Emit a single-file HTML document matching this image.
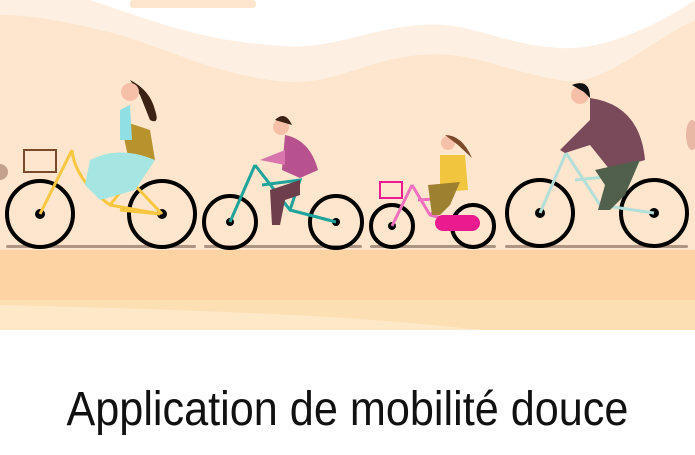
<!DOCTYPE html>
<html><head><meta charset="utf-8"><style>
html,body{margin:0;padding:0;background:#fff;width:695px;height:455px;overflow:hidden}
svg{display:block;position:absolute;left:0;top:0}
h1{position:absolute;left:0;width:695px;top:382px;margin:0;text-align:center;font:400 48px "Liberation Sans Narrow","Liberation Sans",sans-serif;color:#111;transform:scaleX(0.9);transform-origin:347px 0}
</style></head><body>
<svg width="695" height="330" viewBox="0 0 695 330">
<rect width="695" height="330" fill="#fde6cd"/>
<path d="M0 0H695V20C650 40 600 90 560 80C500 70 470 50 420 55C360 60 330 90 270 80C200 70 150 40 100 30C60 20 30 15 0 15Z" fill="#fdf0e2"/>
<path d="M90 0H695V0C650 30 600 50 560 48C500 45 470 20 420 25C360 30 330 52 270 45C200 40 150 20 90 0Z" fill="#fff"/>
<rect x="130" y="0" width="126" height="8" rx="3" fill="#fde6cd"/>
<path d="M0 250H695V300C500 300 300 310 0 300Z" fill="#fdd3a3"/>
<path d="M0 300C500 300 600 300 695 300V330H0Z" fill="#fddfb4"/>
<path d="M0 305C200 310 350 315 480 330H0Z" fill="#fde9c8"/>
<g fill="#8d7263" opacity=".7">
<rect x="6" y="245" width="190" height="3" rx="1.5"/><rect x="204" y="245" width="158" height="3" rx="1.5"/><rect x="370" y="245" width="126" height="3" rx="1.5"/><rect x="505" y="245" width="183" height="3" rx="1.5"/></g>
<g fill="none" stroke="#000" stroke-width="4">
<circle cx="40" cy="214" r="33"/><circle cx="162" cy="214" r="33"/>
<circle cx="230" cy="222" r="26"/><circle cx="336" cy="222" r="26"/>
<circle cx="392" cy="226" r="21"/><circle cx="473" cy="226" r="21"/>
<circle cx="540" cy="213" r="33"/><circle cx="654" cy="213" r="33"/></g>
<g fill="#000"><circle cx="40" cy="214" r="5"/><circle cx="162" cy="214" r="5"/><circle cx="230" cy="222" r="4"/><circle cx="336" cy="222" r="4"/><circle cx="392" cy="226" r="4"/><circle cx="540" cy="213" r="5"/><circle cx="654" cy="213" r="5"/></g>
<g stroke="#f8c63f" stroke-width="3" fill="none"><path d="M40 214L72 150M72 150Q75 180 110 205L160 214L120 210M110 205L130 180L162 214"/></g>
<rect x="24" y="150" width="32" height="22" fill="none" stroke="#7a4a2a" stroke-width="2"/>
<path d="M120 120L150 130L155 160L130 165Z" fill="#b8922c"/>
<path d="M90 160Q120 145 155 160L135 190L100 200L85 185Z" fill="#a5e6e3"/>
<path d="M130 80Q150 90 155 110Q160 125 150 120L140 95Z" fill="#3b2214"/>
<circle cx="130" cy="92" r="9" fill="#f6c0a8"/>
<path d="M120 110L130 105L132 140L120 140Z" fill="#8fdfe5"/>
<g stroke="#1fa39a" stroke-width="3" fill="none"><path d="M230 222L255 165M255 165L290 210L336 222M262 185L300 180L290 210"/></g>
<path d="M285 135Q310 140 318 170L300 178L282 170Z" fill="#b8528e"/>
<path d="M260 160L285 150L285 165Z" fill="#d875ad"/>
<path d="M270 190L300 180L300 195L285 200L280 225L272 225Z" fill="#6d3e4c"/>
<circle cx="281" cy="127" r="8" fill="#f6c0a8"/><path d="M275 120Q285 110 292 125Z" fill="#3b2214"/>
<g stroke="#f06fbf" stroke-width="3" fill="none"><path d="M392 226L412 185M412 185L430 215L473 226M418 200L450 198L430 215"/></g>
<rect x="380" y="182" width="22" height="16" fill="none" stroke="#ef1a8f" stroke-width="2"/>
<rect x="435" y="215" width="45" height="16" rx="8" fill="#ea1a8f"/>
<path d="M440 155L465 155L468 190L440 192Z" fill="#f2c53f"/>
<path d="M428 185L460 182L450 205L440 215L432 215Z" fill="#9e8130"/>
<circle cx="448" cy="143" r="7" fill="#f6c0a8"/><path d="M445 135Q462 135 472 158L458 145Z" fill="#7a4a2a"/>
<g stroke="#b4ded8" stroke-width="3" fill="none"><path d="M540 213L566 153M566 153L600 205L654 213M575 180L625 175L600 205"/></g>
<path d="M590 98Q640 105 645 160L610 170L590 145L565 153L560 150L590 120Z" fill="#7a4a5a"/>
<path d="M595 170L640 160L625 195L610 210L598 210L605 185Z" fill="#50604c"/>
<circle cx="580" cy="95" r="9" fill="#f6c0a8"/><path d="M572 85Q590 78 590 98L584 92Z" fill="#111"/>
<ellipse cx="692" cy="135" rx="6" ry="15" fill="#e9b8a5"/>
<circle cx="0" cy="172" r="8" fill="#c4a18c"/>
</svg>
<h1>Application de mobilité douce</h1>
</body></html>
